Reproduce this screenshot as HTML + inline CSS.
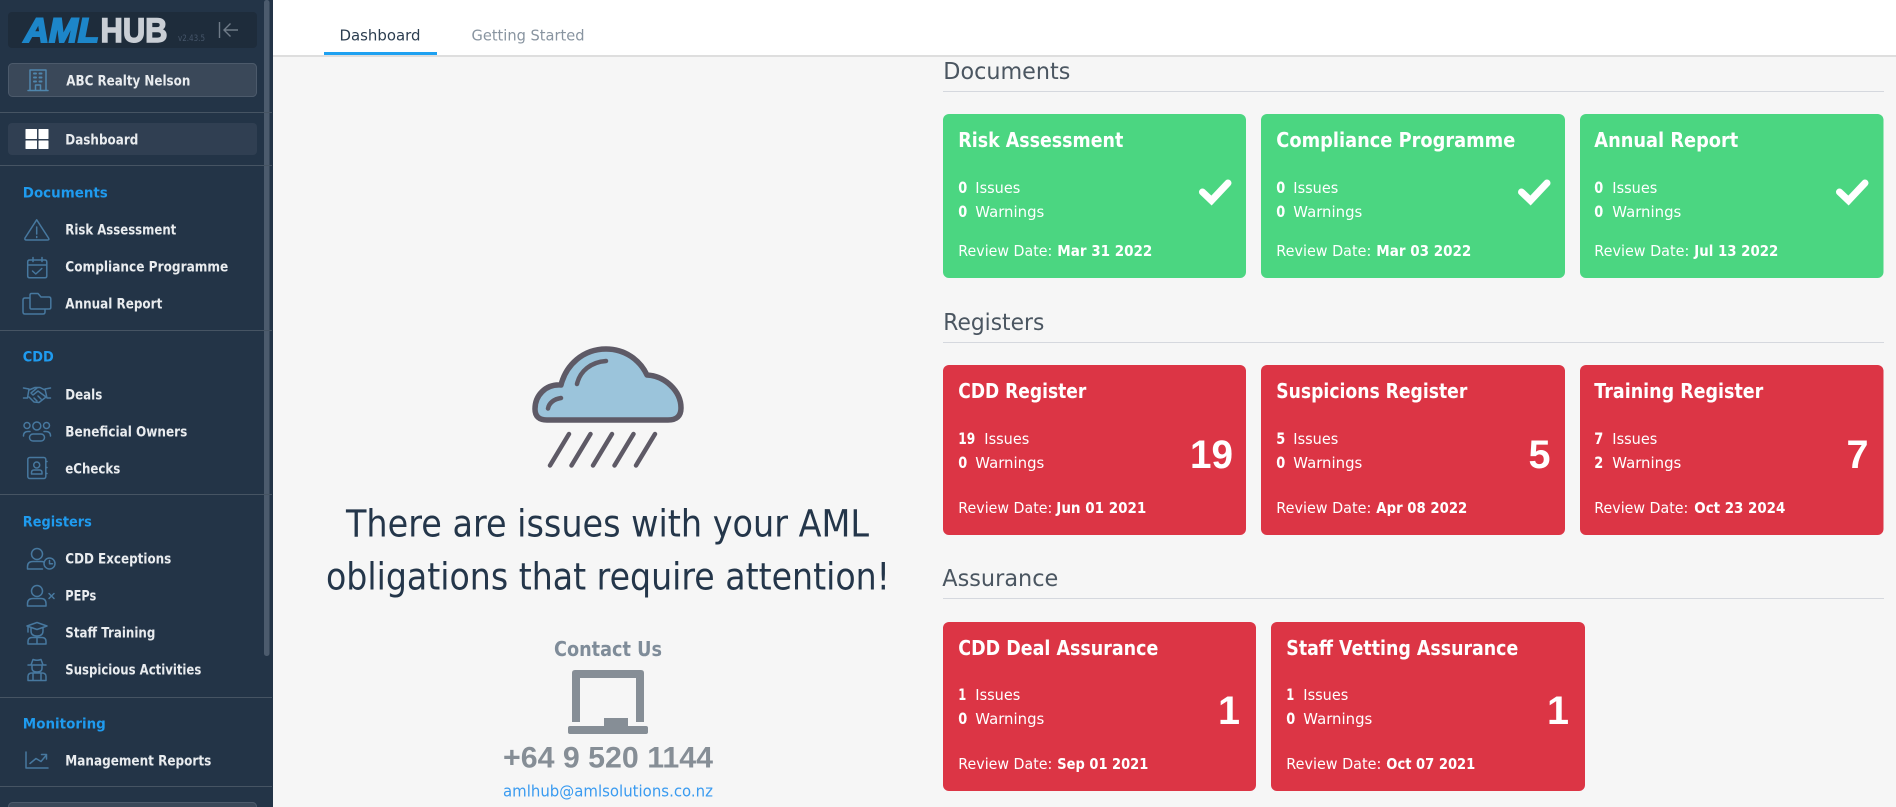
<!DOCTYPE html>
<html lang="en"><head><meta charset="utf-8"><title>AML Hub Dashboard</title>
<style>
html,body{margin:0;padding:0;width:1896px;height:807px;overflow:hidden;background:#f6f6f6}
svg{display:block}
text{font-family:"DejaVu Sans","Liberation Sans",sans-serif;white-space:pre}
.m{font-size:14px;font-weight:700;fill:#e9ecef}
.h{font-size:14.5px;font-weight:700;fill:#1f9bef}
.s{font-size:23px;fill:#4b5661}
.t{font-size:20px;font-weight:700;fill:#fff}
.l{font-size:15.5px;fill:#fff}
.n{font-size:16px;font-weight:700;fill:#fff}
.d{font-size:15.500px;fill:#fff}
.e{font-size:15.500px;font-weight:700;fill:#fff}
.m,.h,.s,.t,.l,.n,.d,.e{transform:translate(-.7px,-1px)}
.g{font-size:40px;font-weight:700;fill:#fff;font-family:"Liberation Sans",sans-serif}
.i{fill:none;stroke:#47789f;stroke-width:1.5;stroke-linecap:round;stroke-linejoin:round}
.c{fill:none;stroke:#fff;stroke-width:7;stroke-linecap:round;stroke-linejoin:miter}
</style></head>
<body>
<svg xmlns="http://www.w3.org/2000/svg" width="1896" height="807" viewBox="0 0 1896 807">
<rect width="1896" height="807" fill="#f6f6f6"/>
<rect x="273" width="1623" height="55" fill="#fff"/>
<rect x="273" y="55" width="1623" height="2" fill="#dedede"/>
<rect x="324" y="52" width="113" height="3" fill="#1ea1f1"/>
<text x="339.500" y="40.500" font-size="15.500" fill="#2b3d50" textLength="81" lengthAdjust="spacingAndGlyphs">Dashboard</text>
<text x="471.500" y="40.500" font-size="15.500" fill="#8894a0" textLength="113" lengthAdjust="spacingAndGlyphs">Getting Started</text>

<!-- Sidebar -->
<rect width="273" height="807" fill="#233447"/>
<rect x="264" y="0" width="5.500" height="656" rx="2.500" fill="#4c5b6d"/>
<rect x="8" y="12" width="249" height="36" rx="4" fill="#1e2c3b"/>
<text x="24" y="42" font-size="34" font-weight="700" font-style="italic" fill="#1d86c9" stroke="#1d86c9" stroke-width="2" style="font-family:'Liberation Sans',sans-serif" textLength="75" lengthAdjust="spacingAndGlyphs">AML</text>
<text x="100.500" y="42" font-size="34" font-weight="700" fill="#c9ced5" stroke="#c9ced5" stroke-width="1.400" style="font-family:'Liberation Sans',sans-serif" textLength="67" lengthAdjust="spacingAndGlyphs">HUB</text>
<text x="178" y="41" font-size="8.500" fill="#46566a" textLength="27" lengthAdjust="spacingAndGlyphs">v2.43.5</text>
<path d="M219.500 22V38M238 30H224M230.500 23.500L224 30L230.500 36.500" fill="none" stroke="#6f7b88" stroke-width="1.400"/>

<rect x="8.500" y="63.500" width="248" height="33" rx="4" fill="#3a4859" stroke="#4c5a6b"/>
<g class="i" style="stroke:#4f86ad"><path d="M28 90.500H48M30 90V70H46V90M35.500 90.500V85H40.500V90.500"/><path d="M34 73.500h2M39.500 73.500h2M34 77.500h2M39.500 77.500h2M34 81.500h2M39.500 81.500h2" stroke-width="2"/></g>
<text class="m" x="67" y="86.500" textLength="124" lengthAdjust="spacingAndGlyphs">ABC Realty Nelson</text>

<rect y="112" width="272" height="1" fill="#465463"/>
<rect x="8" y="123" width="249" height="32" rx="4" fill="#303f52"/>
<g fill="#fff"><rect x="25.500" y="129" width="11.500" height="10" rx=".5"/><rect x="38.500" y="129" width="10" height="10" rx=".5"/><rect x="25.500" y="140.500" width="11.500" height="8.500" rx=".5"/><rect x="38.500" y="140.500" width="10" height="8.500" rx=".5"/></g>
<text class="m" x="66" y="145.500" textLength="73" lengthAdjust="spacingAndGlyphs">Dashboard</text>
<rect y="165" width="272" height="1" fill="#465463"/>

<text class="h" x="23.500" y="198.500" textLength="85" lengthAdjust="spacingAndGlyphs">Documents</text>
<path class="i" d="M36.700 219.800L25 238Q24.300 240 26.500 240H47.500Q49.600 240 48.500 238ZM36.700 227V234M36.700 236.500V237.500"/>
<text class="m" x="66" y="235.500" textLength="111" lengthAdjust="spacingAndGlyphs">Risk Assessment</text>
<path class="i" d="M29.500 260H45Q46.800 260 46.800 262V276Q46.800 277.800 45 277.800H29.500Q27.700 277.800 27.700 276V262Q27.700 260 29.500 260ZM27.700 265H46.800M33 257.500V261.500M42 257.500V261.500M32.500 271L35.800 274L41.800 268.500"/>
<text class="m" x="66" y="272.500" textLength="163" lengthAdjust="spacingAndGlyphs">Compliance Programme</text>
<path class="i" d="M30 298V295Q30 293.500 31.500 293.500H38L41 297H49Q50.800 297 50.800 299V307.500Q50.800 309 49 309H45M30 298H25Q23 298 23 300V312Q23 314 25 314H43Q45 314 45 312V309H31.500Q30 309 30 307.500V298"/>
<text class="m" x="66" y="309.500" textLength="97" lengthAdjust="spacingAndGlyphs">Annual Report</text>

<rect y="330" width="272" height="1" fill="#465463"/>
<text class="h" x="23.500" y="362.500" textLength="31" lengthAdjust="spacingAndGlyphs">CDD</text>
<path class="i" d="M23.500 388L29 389L27.500 398L23.500 398M50.500 388L45 389L47 398L50.500 398M29 390L35 387.500L40 387.500L45 390M29 397L34 402L39 402.500L46 397L38 391L33 395L31 393L37 388M34 398L37 401M38 396L41 399"/>
<text class="m" x="66" y="400.500" textLength="37" lengthAdjust="spacingAndGlyphs">Deals</text>
<g class="i"><circle cx="36.800" cy="426" r="4"/><circle cx="27" cy="425.500" r="3"/><circle cx="46.500" cy="425.500" r="3"/><rect x="29.500" y="434" width="15" height="7" rx="3.500"/><path d="M23.500 436Q23.500 431.500 28 431.500H30M50.500 436Q50.500 431.500 46 431.500H44"/></g>
<text class="m" x="66" y="437.500" textLength="122" lengthAdjust="spacingAndGlyphs">Beneficial Owners</text>
<g class="i"><rect x="27.800" y="457.500" width="18" height="21" rx="2"/><circle cx="36.700" cy="465" r="3"/><path d="M31.500 474V472.500Q31.500 470 34 470H39.500Q42 470 42 472.500V474ZM46.500 461.500H47M46.500 467.500H47M46.500 473.500H47"/></g>
<text class="m" x="66" y="474.500" textLength="55" lengthAdjust="spacingAndGlyphs">eChecks</text>

<rect y="494" width="272" height="1" fill="#465463"/>
<text class="h" x="23.500" y="527.500" textLength="69" lengthAdjust="spacingAndGlyphs">Registers</text>
<g class="i"><circle cx="37" cy="554" r="5.500"/><path d="M42.500 569H27.500V566.500Q27.500 561.500 33 561.500H41Q43 561.500 44 562"/><circle cx="49.500" cy="563.500" r="5.500"/><path d="M49.500 560.500V563.800H52.500"/></g>
<text class="m" x="66" y="564.500" textLength="106" lengthAdjust="spacingAndGlyphs">CDD Exceptions</text>
<g class="i"><circle cx="37" cy="591" r="5.500"/><path d="M46 606H27.500V603.500Q27.500 598.500 33 598.500H41Q46 598.500 46 603.500ZM49 593.500L54 598.500M54 593.500L49 598.500"/></g>
<text class="m" x="66" y="601.500" textLength="31" lengthAdjust="spacingAndGlyphs">PEPs</text>
<g class="i"><path d="M27 626L37 622.500L47 626L37 629.500ZM28 627V632M31 628V631Q31 636 37 636Q43 636 43 631V628M28 644V641.500Q28 637.500 32 637.500H42Q46 637.500 46 641.500V644ZM37 638V644"/></g>
<text class="m" x="66" y="638.500" textLength="90" lengthAdjust="spacingAndGlyphs">Staff Training</text>
<g class="i"><path d="M28 665H46M31 665L33 659.500Q37 661 41 659.500L43 665M32 666V668Q32 672 37 672Q42 672 42 668V666M28 680.500V676.500Q28 673 32 673H42Q46 673 46 676.500V680.500ZM33 673V680M41 673V680"/></g>
<text class="m" x="66" y="675.500" textLength="136" lengthAdjust="spacingAndGlyphs">Suspicious Activities</text>

<rect y="697" width="272" height="1" fill="#465463"/>
<text class="h" x="23.500" y="729.500" textLength="83" lengthAdjust="spacingAndGlyphs">Monitoring</text>
<path class="i" d="M26 752V768H48M30 763.500L36 758.500L41 761.500L46 755.500M41.500 754.500H46.500V759"/>
<text class="m" x="66" y="766.500" textLength="146" lengthAdjust="spacingAndGlyphs">Management Reports</text>
<rect y="786" width="272" height="1" fill="#465463"/>
<rect x="8.500" y="802.500" width="248" height="30" rx="4" fill="#3a4859" stroke="#4c5a6b"/>

<!-- Left panel -->
<path d="M547 420H668Q681 420 681 408C681 391 665 376 647 375C640 360 625 349 606 349C583 349 566 365 561 385C545 384 535 396 535 409Q535 420 547 420Z" fill="#9bc4db" stroke="#5e5a66" stroke-width="5.500" stroke-linejoin="round"/>
<path d="M577 384C580 371 591 362 606 361M548 408.500C549 403 554 399 561 398" fill="none" stroke="#5e5a66" stroke-width="4.500" stroke-linecap="round"/>
<path d="M569 434L550 465.500M590.500 434L571.500 465.500M612 434L593 465.500M633.500 434L614.500 465.500M655 434L636 465.500" fill="none" stroke="#5e5a66" stroke-width="4.500" stroke-linecap="round"/>
<text x="346" y="536.500" font-size="37" fill="#24364a" textLength="523" lengthAdjust="spacingAndGlyphs">There are issues with your AML</text>
<text x="326" y="589.500" font-size="37" fill="#24364a" textLength="564" lengthAdjust="spacingAndGlyphs">obligations that require attention!</text>
<text x="554" y="656" font-size="20.500" font-weight="700" fill="#7f8c99" textLength="108" lengthAdjust="spacingAndGlyphs">Contact Us</text>
<path d="M572 722V673Q572 670 575 670H641Q644 670 644 673V722H636V678H580V722ZM604 718H628V726H646Q648 726 648 728V732Q648 734 646 734H570Q568 734 568 732V728Q568 726 570 726H604Z" fill="#868e96"/>
<text x="503" y="767.500" font-size="29.500" font-weight="700" fill="#868e96" style="font-family:'Liberation Sans',sans-serif" textLength="210" lengthAdjust="spacingAndGlyphs">+64 9 520 1144</text>
<text x="503" y="796.500" font-size="16" fill="#3a9bf0" textLength="210" lengthAdjust="spacingAndGlyphs">amlhub@amlsolutions.co.nz</text>

<!-- Documents -->
<text class="s" x="944" y="80" textLength="127" lengthAdjust="spacingAndGlyphs">Documents</text>
<rect x="943" y="91" width="941" height="1" fill="#d5d8de"/>
<g fill="#4bd681">
<rect x="943" y="114" width="303" height="164" rx="6"/>
<rect x="1261" y="114" width="304" height="164" rx="6"/>
<rect x="1580" y="114" width="303.500" height="164" rx="6"/>
</g>
<text class="t" x="959" y="148" textLength="165" lengthAdjust="spacingAndGlyphs">Risk Assessment</text>
<text class="n" x="959" y="194" textLength="9" lengthAdjust="spacingAndGlyphs">0</text><text class="l" x="976" y="194" textLength="45" lengthAdjust="spacingAndGlyphs">Issues</text>
<text class="n" x="959" y="218" textLength="9" lengthAdjust="spacingAndGlyphs">0</text><text class="l" x="976" y="218" textLength="69" lengthAdjust="spacingAndGlyphs">Warnings</text>
<text class="d" x="959" y="257" textLength="94" lengthAdjust="spacingAndGlyphs">Review Date:</text><text class="e" x="1058" y="257" textLength="95" lengthAdjust="spacingAndGlyphs">Mar 31 2022</text>
<path class="c" d="M1202.500 192L1211.500 200.500L1228 183"/>

<text class="t" x="1277" y="148" textLength="239" lengthAdjust="spacingAndGlyphs">Compliance Programme</text>
<text class="n" x="1277" y="194" textLength="9" lengthAdjust="spacingAndGlyphs">0</text><text class="l" x="1294" y="194" textLength="45" lengthAdjust="spacingAndGlyphs">Issues</text>
<text class="n" x="1277" y="218" textLength="9" lengthAdjust="spacingAndGlyphs">0</text><text class="l" x="1294" y="218" textLength="69" lengthAdjust="spacingAndGlyphs">Warnings</text>
<text class="d" x="1277" y="257" textLength="95" lengthAdjust="spacingAndGlyphs">Review Date:</text><text class="e" x="1377" y="257" textLength="95" lengthAdjust="spacingAndGlyphs">Mar 03 2022</text>
<path class="c" d="M1521.500 192L1530.500 200.500L1547 183"/>

<text class="t" x="1595" y="148" textLength="144" lengthAdjust="spacingAndGlyphs">Annual Report</text>
<text class="n" x="1595" y="194" textLength="9" lengthAdjust="spacingAndGlyphs">0</text><text class="l" x="1613" y="194" textLength="45" lengthAdjust="spacingAndGlyphs">Issues</text>
<text class="n" x="1595" y="218" textLength="9" lengthAdjust="spacingAndGlyphs">0</text><text class="l" x="1613" y="218" textLength="69" lengthAdjust="spacingAndGlyphs">Warnings</text>
<text class="d" x="1595" y="257" textLength="95" lengthAdjust="spacingAndGlyphs">Review Date:</text><text class="e" x="1695" y="257" textLength="84" lengthAdjust="spacingAndGlyphs">Jul 13 2022</text>
<path class="c" d="M1839.500 192L1848.500 200.500L1865 183"/>

<!-- Registers -->
<text class="s" x="944" y="331" textLength="101" lengthAdjust="spacingAndGlyphs">Registers</text>
<rect x="943" y="342" width="941" height="1" fill="#d5d8de"/>
<g fill="#dc3545">
<rect x="943" y="365" width="303" height="170" rx="6"/>
<rect x="1261" y="365" width="304" height="170" rx="6"/>
<rect x="1580" y="365" width="303.500" height="170" rx="6"/>
</g>
<text class="t" x="959" y="399" textLength="128" lengthAdjust="spacingAndGlyphs">CDD Register</text>
<text class="n" x="959" y="445" textLength="17" lengthAdjust="spacingAndGlyphs">19</text><text class="l" x="985" y="445" textLength="45" lengthAdjust="spacingAndGlyphs">Issues</text>
<text class="n" x="959" y="469" textLength="9" lengthAdjust="spacingAndGlyphs">0</text><text class="l" x="976" y="469" textLength="69" lengthAdjust="spacingAndGlyphs">Warnings</text>
<text class="d" x="959" y="514" textLength="94" lengthAdjust="spacingAndGlyphs">Review Date:</text><text class="e" x="1057" y="514" textLength="90" lengthAdjust="spacingAndGlyphs">Jun 01 2021</text>
<text class="g" x="1190" y="468" textLength="43" lengthAdjust="spacingAndGlyphs">19</text>

<text class="t" x="1277" y="399" textLength="191" lengthAdjust="spacingAndGlyphs">Suspicions Register</text>
<text class="n" x="1277" y="445" textLength="9" lengthAdjust="spacingAndGlyphs">5</text><text class="l" x="1294" y="445" textLength="45" lengthAdjust="spacingAndGlyphs">Issues</text>
<text class="n" x="1277" y="469" textLength="9" lengthAdjust="spacingAndGlyphs">0</text><text class="l" x="1294" y="469" textLength="69" lengthAdjust="spacingAndGlyphs">Warnings</text>
<text class="d" x="1277" y="514" textLength="95" lengthAdjust="spacingAndGlyphs">Review Date:</text><text class="e" x="1377" y="514" textLength="91" lengthAdjust="spacingAndGlyphs">Apr 08 2022</text>
<text class="g" x="1528.500" y="468" textLength="22" lengthAdjust="spacingAndGlyphs">5</text>

<text class="t" x="1595" y="399" textLength="169" lengthAdjust="spacingAndGlyphs">Training Register</text>
<text class="n" x="1595" y="445" textLength="9" lengthAdjust="spacingAndGlyphs">7</text><text class="l" x="1613" y="445" textLength="45" lengthAdjust="spacingAndGlyphs">Issues</text>
<text class="n" x="1595" y="469" textLength="9" lengthAdjust="spacingAndGlyphs">2</text><text class="l" x="1613" y="469" textLength="69" lengthAdjust="spacingAndGlyphs">Warnings</text>
<text class="d" x="1595" y="514" textLength="94" lengthAdjust="spacingAndGlyphs">Review Date:</text><text class="e" x="1695" y="514" textLength="91" lengthAdjust="spacingAndGlyphs">Oct 23 2024</text>
<text class="g" x="1846.500" y="468" textLength="22" lengthAdjust="spacingAndGlyphs">7</text>

<!-- Assurance -->
<text class="s" x="943" y="587" textLength="116" lengthAdjust="spacingAndGlyphs">Assurance</text>
<rect x="943" y="598" width="941" height="1" fill="#d5d8de"/>
<g fill="#dc3545">
<rect x="943" y="622" width="313" height="169" rx="6"/>
<rect x="1271" y="622" width="314" height="169" rx="6"/>
</g>
<text class="t" x="959" y="656" textLength="200" lengthAdjust="spacingAndGlyphs">CDD Deal Assurance</text>
<text class="n" x="959" y="701" textLength="8" lengthAdjust="spacingAndGlyphs">1</text><text class="l" x="976" y="701" textLength="45" lengthAdjust="spacingAndGlyphs">Issues</text>
<text class="n" x="959" y="725" textLength="9" lengthAdjust="spacingAndGlyphs">0</text><text class="l" x="976" y="725" textLength="69" lengthAdjust="spacingAndGlyphs">Warnings</text>
<text class="d" x="959" y="770" textLength="94" lengthAdjust="spacingAndGlyphs">Review Date:</text><text class="e" x="1058" y="770" textLength="91" lengthAdjust="spacingAndGlyphs">Sep 01 2021</text>
<text class="g" x="1218" y="724" textLength="22" lengthAdjust="spacingAndGlyphs">1</text>

<text class="t" x="1287" y="656" textLength="232" lengthAdjust="spacingAndGlyphs">Staff Vetting Assurance</text>
<text class="n" x="1287" y="701" textLength="8" lengthAdjust="spacingAndGlyphs">1</text><text class="l" x="1304" y="701" textLength="45" lengthAdjust="spacingAndGlyphs">Issues</text>
<text class="n" x="1287" y="725" textLength="9" lengthAdjust="spacingAndGlyphs">0</text><text class="l" x="1304" y="725" textLength="69" lengthAdjust="spacingAndGlyphs">Warnings</text>
<text class="d" x="1287" y="770" textLength="95" lengthAdjust="spacingAndGlyphs">Review Date:</text><text class="e" x="1387" y="770" textLength="89" lengthAdjust="spacingAndGlyphs">Oct 07 2021</text>
<text class="g" x="1547" y="724" textLength="22" lengthAdjust="spacingAndGlyphs">1</text>
</svg>
</body></html>
